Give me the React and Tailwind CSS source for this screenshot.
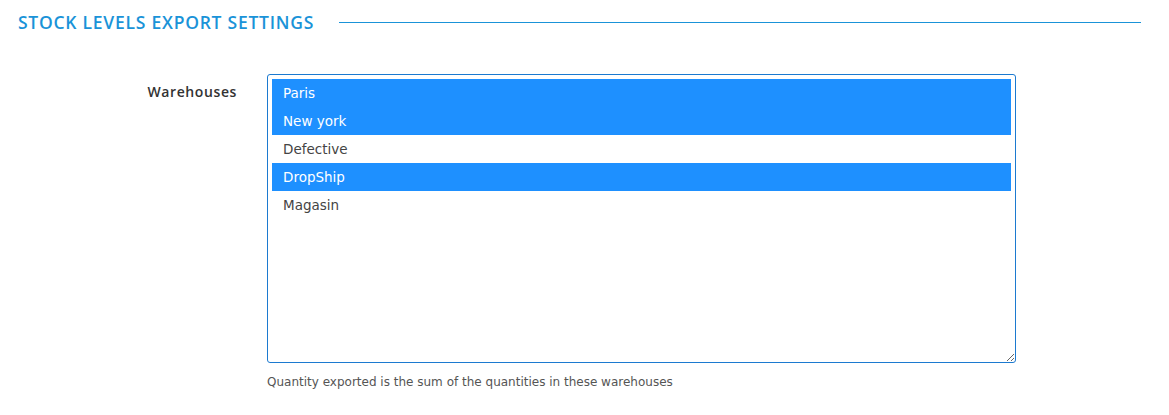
import React from 'react';

const warehouses = [
  { name: 'Paris', selected: true },
  { name: 'New york', selected: true },
  { name: 'Defective', selected: false },
  { name: 'DropShip', selected: true },
  { name: 'Magasin', selected: false },
];

export default function App() {
  return (
    <div className="w-[1169px] h-[415px] bg-white font-['DejaVu_Sans',sans-serif]">
      {/* Section header */}
      <div className="flex items-center pl-[18px] pr-[28px] pt-[11px]">
        <h2 className="font-['Open_Sans',sans-serif] text-[17.5px] leading-[22px] font-semibold tracking-[0.75px] text-[#1a93d8] uppercase whitespace-nowrap">
          Stock levels export settings
        </h2>
        <div className="flex-1 ml-[25px] mt-[1px] border-t-[1.5px] border-solid border-[#1a93d8]"></div>
      </div>

      {/* Warehouses field */}
      <div className="flex mt-[41px]">
        <div className="w-[237px] pt-[7px] text-right font-['Open_Sans',sans-serif] text-[14px] font-semibold tracking-[0.6px] text-[#333333]">
          Warehouses
        </div>
        <div className="ml-[30px]">
          <div className="w-[749px] h-[289px] border border-solid border-[#1c7ad0] rounded-[3px] p-[4px] resize overflow-auto">
            {warehouses.map((w) => (
              <div
                key={w.name}
                className={`h-[28px] flex items-center pl-[11px] text-[13.5px] ${
                  w.selected ? 'bg-[#1e90ff] text-white' : 'text-[#444444]'
                }`}
              >
                {w.name}
              </div>
            ))}
          </div>
          <p className="mt-[10px] text-[12px] text-[#555555]">
            Quantity exported is the sum of the quantities in these warehouses
          </p>
        </div>
      </div>
    </div>
  );
}
